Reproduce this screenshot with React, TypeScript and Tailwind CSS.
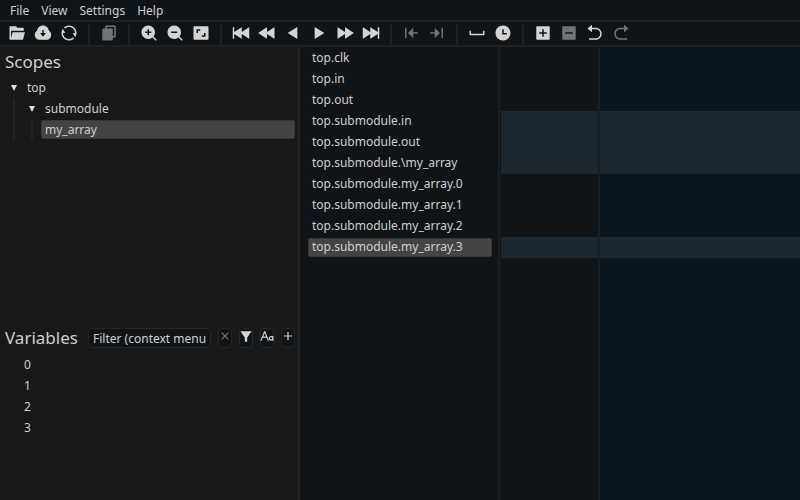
import type { ReactNode } from 'react'
import {
  RiAddBoxFill,
  RiAddFill,
  RiArrowGoBackFill,
  RiArrowGoForwardFill,
  RiAspectRatioFill,
  RiCheckboxIndeterminateFill,
  RiCloseFill,
  RiContractLeftFill,
  RiContractRightFill,
  RiDownloadCloudFill,
  RiFileCopyFill,
  RiFilterFill,
  RiFolderOpenFill,
  RiFontSize,
  RiForwardEndFill,
  RiRefreshLine,
  RiRewindFill,
  RiRewindStartFill,
  RiSpace,
  RiSpeedFill,
  RiTimeFill,
  RiZoomInFill,
  RiZoomOutFill,
} from 'react-icons/ri'

type IconProps = { size?: number }
type Tool = { label: string; icon: (props: IconProps) => ReactNode; disabled?: boolean }

// Wider triangles than the ones in the icon set
function StepLeft({ size }: IconProps) {
  return (
    <svg width={size} height={size} viewBox="0 0 24 24" fill="currentColor">
      <path d="M17.8 4.5v15a.4.4 0 0 1-.6.3L5.4 12.4a.5.5 0 0 1 0-.8l11.8-7.4a.4.4 0 0 1 .6.3z" />
    </svg>
  )
}

function StepRight({ size }: IconProps) {
  return (
    <svg width={size} height={size} viewBox="0 0 24 24" fill="currentColor">
      <path d="M6.2 4.5v15a.4.4 0 0 0 .6.3l11.8-7.4a.5.5 0 0 0 0-.8L6.8 4.2a.4.4 0 0 0-.6.3z" />
    </svg>
  )
}

const menus = ['File', 'View', 'Settings', 'Help']

// Each inner list is one group, groups are split by a separator
const toolGroups: Tool[][] = [
  [
    { label: 'Open file', icon: RiFolderOpenFill },
    { label: 'Open URL', icon: RiDownloadCloudFill },
    { label: 'Reload', icon: RiRefreshLine },
  ],
  [{ label: 'Copy variable value', icon: RiFileCopyFill, disabled: true }],
  [
    { label: 'Zoom in', icon: RiZoomInFill },
    { label: 'Zoom out', icon: RiZoomOutFill },
    { label: 'Zoom to fit', icon: RiAspectRatioFill },
  ],
  [
    { label: 'Go to start', icon: RiRewindStartFill },
    { label: 'Go one page left', icon: RiRewindFill },
    { label: 'Go left', icon: StepLeft },
    { label: 'Go right', icon: StepRight },
    { label: 'Go one page right', icon: RiSpeedFill },
    { label: 'Go to end', icon: RiForwardEndFill },
  ],
  [
    { label: 'Previous transition', icon: RiContractLeftFill, disabled: true },
    { label: 'Next transition', icon: RiContractRightFill, disabled: true },
  ],
  [
    { label: 'Add divider', icon: RiSpace },
    { label: 'Add timeline', icon: RiTimeFill },
  ],
  [
    { label: 'Add viewport', icon: RiAddBoxFill },
    { label: 'Remove viewport', icon: RiCheckboxIndeterminateFill, disabled: true },
    { label: 'Undo', icon: RiArrowGoBackFill },
    { label: 'Redo', icon: RiArrowGoForwardFill, disabled: true },
  ],
]

const items = [
  { name: 'top.clk' },
  { name: 'top.in' },
  { name: 'top.out' },
  { name: 'top.submodule.in', shaded: true },
  { name: 'top.submodule.out', shaded: true },
  { name: 'top.submodule.\\my_array', shaded: true },
  { name: 'top.submodule.my_array.0' },
  { name: 'top.submodule.my_array.1' },
  { name: 'top.submodule.my_array.2' },
  { name: 'top.submodule.my_array.3', shaded: true, selected: true },
]

const variables = ['0', '1', '2', '3']

function Toolbar() {
  return (
    <div className="flex h-[25px] shrink-0 items-start gap-2 border-b-2 border-[#1c2125] px-2 pt-0.5">
      {toolGroups.map((group, i) => (
        <div key={i} className="flex items-start gap-2">
          {i > 0 && <div className="mx-0.5 h-[21px] w-0.5 bg-[#1c2125]" />}
          {group.map(({ label, icon: Icon, disabled }) => (
            <button
              key={label}
              aria-label={label}
              disabled={disabled}
              className="text-[#d4d4d4] disabled:text-[#707476]"
            >
              <Icon size={18} />
            </button>
          ))}
        </div>
      ))}
    </div>
  )
}

function TreeNode({ name, children }: { name: string; children: ReactNode }) {
  return (
    <li>
      <button className="flex h-[21px] items-center gap-2">
        <svg width="10" height="10" viewBox="0 0 10 10" fill="#dcdcdc">
          <path d="M2 2h6L5 8z" />
        </svg>
        {name}
      </button>
      <ul className="ml-1 border-l-2 border-[#222222] pl-3">{children}</ul>
    </li>
  )
}

function SmallButton({ label, disabled, children }: { label: string; disabled?: boolean; children: ReactNode }) {
  return (
    <button
      aria-label={label}
      disabled={disabled}
      className="flex h-5 w-3.5 shrink-0 items-start justify-center rounded-sm border border-[#20282d] bg-[#0f1418] text-[#d4d4d4] disabled:text-[#707476] [&>svg]:shrink-0"
    >
      {children}
    </button>
  )
}

function Sidebar() {
  return (
    <aside className="flex w-[300px] shrink-0 flex-col border-r-2 border-[#202224] bg-[#181818]">
      <section className="flex-1 basis-0 pt-0.5 pr-[3px]">
        <h2 className="h-7 pl-[5px] text-[17px] leading-[26px]">Scopes</h2>
        <ul className="pl-[9px]">
          <TreeNode name="top">
            <TreeNode name="submodule">
              <li className="-ml-1 py-px">
                <button className="flex h-[19px] w-full items-center rounded-xs border border-[#363636] bg-[#444444] pl-[3px]">
                  my_array
                </button>
              </li>
            </TreeNode>
          </TreeNode>
        </ul>
      </section>
      <section className="h-[176px] shrink-0">
        <div className="flex h-7 items-center gap-[7px] pr-[3px] pl-[5px]">
          <h2 className="flex-1 text-[17px] leading-7">Variables</h2>
          <input
            aria-label="Filter variables"
            placeholder="Filter (context menu for type)"
            className="h-5 w-[123px] rounded-sm border border-[#20282d] bg-[#0f1418] px-1 placeholder:text-[#cfcfcf]"
          />
          <SmallButton label="Clear filter" disabled>
            <RiCloseFill size={14} />
          </SmallButton>
          <SmallButton label="Filter by type">
            <RiFilterFill size={14} />
          </SmallButton>
          <SmallButton label="Match case">
            <RiFontSize size={14} />
          </SmallButton>
          <SmallButton label="Add all variables">
            <RiAddFill size={14} />
          </SmallButton>
        </div>
        <ul className="pt-0.5 pl-6">
          {variables.map((name) => (
            <li key={name} className="h-[21px] leading-[21px]">
              {name}
            </li>
          ))}
        </ul>
      </section>
    </aside>
  )
}

// One column of the wave table, only the row backgrounds are painted
function Bands() {
  return (
    <>
      {items.map(({ name, shaded }) => (
        <div key={name} className={shaded ? 'h-[21px] bg-[#1c262e]' : 'h-[21px]'} />
      ))}
    </>
  )
}

export default function App() {
  return (
    <div className="flex h-screen flex-col overflow-hidden bg-[#0f1418] font-['Noto_Sans',sans-serif] text-xs text-[#cfcfcf]">
      <nav className="flex h-[22px] shrink-0 gap-3 border-b-2 border-[#1c2125] px-2.5 pt-0.5">
        {menus.map((menu) => (
          <button key={menu}>{menu}</button>
        ))}
      </nav>
      <Toolbar />
      <main className="flex min-h-0 flex-1">
        <Sidebar />
        <ul className="w-[200px] shrink-0 border-r-2 border-[#1a1e21] px-2 pt-px pr-1.5">
          {items.map(({ name, selected }) => (
            <li key={name} className="flex h-[21px] items-center">
              <button
                className={
                  selected
                    ? 'h-[19px] w-full rounded-xs border border-[#363636] bg-[#444444] pb-0.5 pl-[3px] text-left'
                    : 'h-[19px] w-full border border-transparent pb-0.5 pl-[3px] text-left'
                }
              >
                {name}
              </button>
            </li>
          ))}
        </ul>
        <div className="w-[100px] shrink-0 border-r-2 border-[#1a1e21] pt-px pl-px">
          <Bands />
        </div>
        <div className="flex-1 bg-[#0a151e] pt-px">
          <Bands />
        </div>
      </main>
    </div>
  )
}
